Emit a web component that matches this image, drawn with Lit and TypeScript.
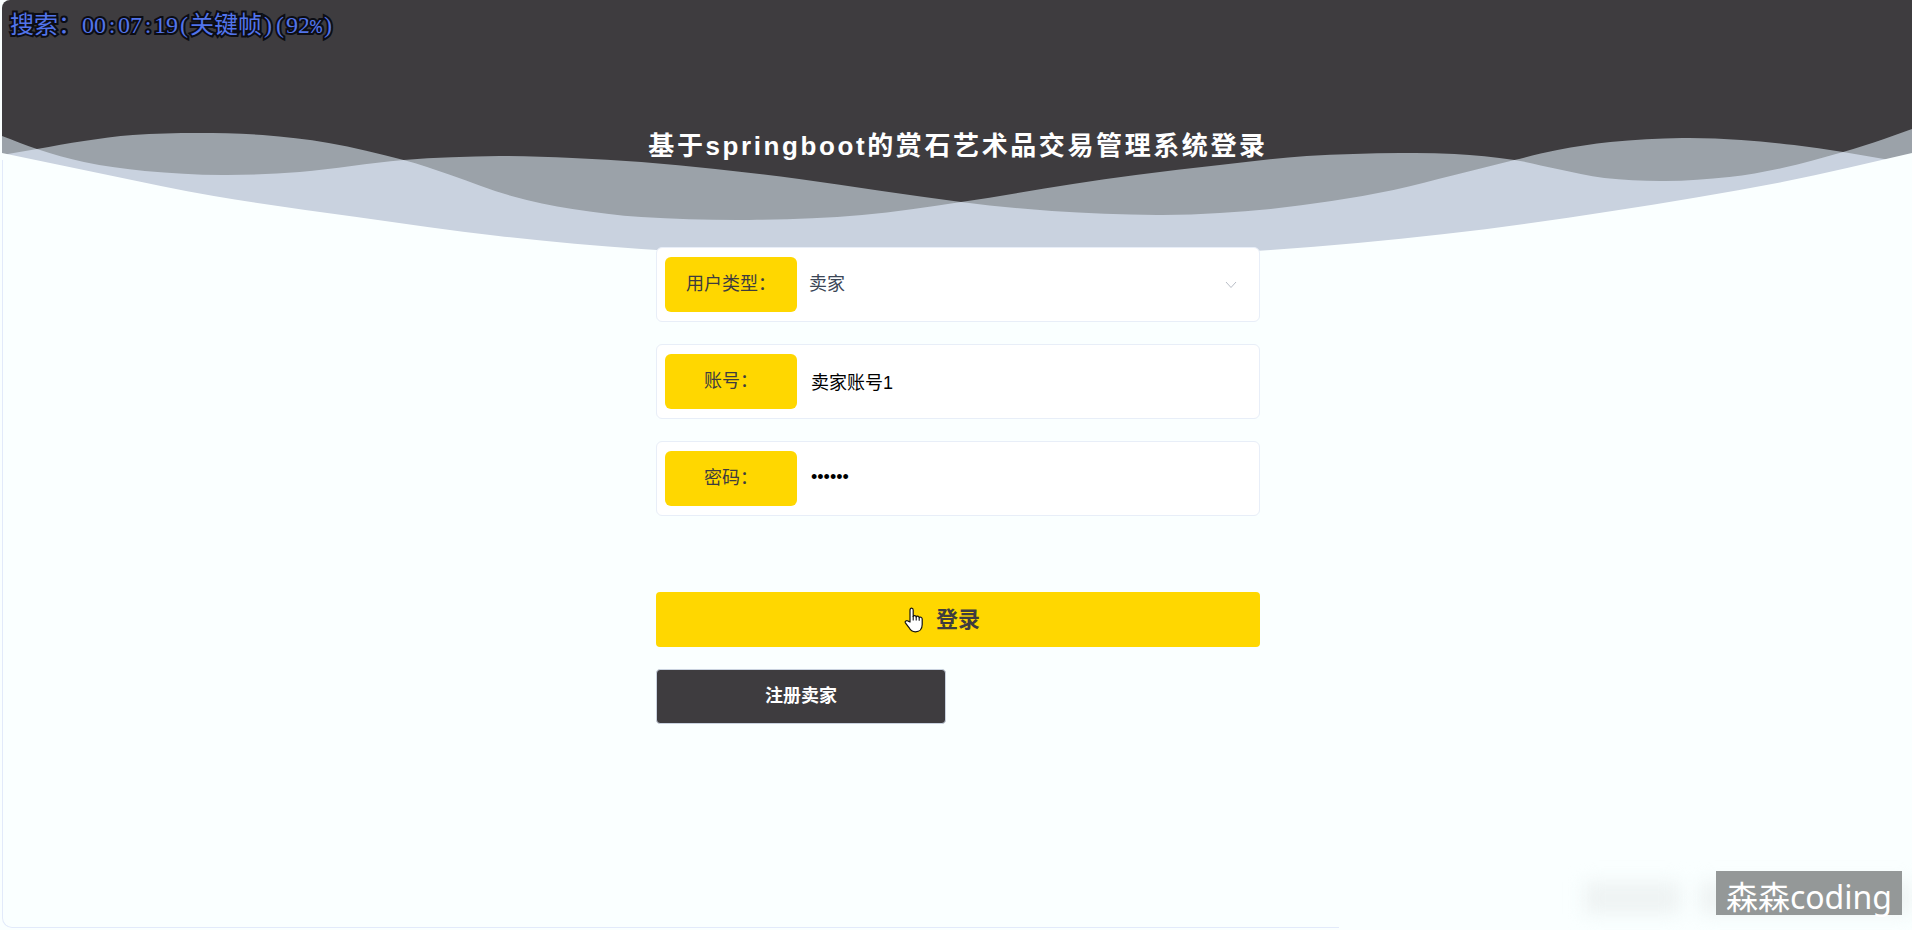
import { LitElement, html, svg, css } from "lit";
import { customElement, state } from "lit/decorators.js";

type Point = [number, number];

const ARC: Point[] = [
  [0, 153], [106, 175], [212, 196], [355, 217], [497, 236], [640, 249],
  [800, 257], [957, 260], [1114, 257], [1270, 250], [1444, 234],
  [1612, 211], [1782, 182], [1912, 153],
];

const WAVE_BACK: Point[] = [
  [0, 136], [35, 149], [82, 162], [143, 171], [220, 175], [298, 172],
  [402, 160], [498, 156], [571, 158], [640, 162], [714, 169], [798, 179],
  [960, 202], [1051, 211], [1156, 215], [1219, 213], [1270, 209],
  [1331, 201], [1393, 190], [1454, 175], [1514, 160], [1557, 150],
  [1610, 142], [1682, 138], [1741, 140], [1794, 145], [1843, 152],
  [1884, 159], [1912, 164],
];

const WAVE_FRONT: Point[] = [
  [0, 155], [35, 149], [82, 141], [131, 135], [196, 133], [261, 135],
  [327, 143], [402, 160], [449, 175], [510, 196], [571, 209], [640, 217],
  [748, 220], [861, 215], [960, 202], [1072, 184], [1135, 175],
  [1219, 165], [1306, 156], [1400, 153], [1454, 154], [1514, 160],
  [1557, 169], [1604, 178], [1665, 181], [1729, 177], [1782, 168],
  [1843, 152], [1884, 139], [1912, 129],
];

/** Smooth curve through the points, closed along the given horizontal edge. */
function wavePath(points: Point[], edge: number): string {
  let d = `M${points[0][0]} ${edge}L${points[0][0]} ${points[0][1]}`;
  for (let i = 0; i < points.length - 1; i++) {
    const p0 = points[Math.max(i - 1, 0)];
    const p1 = points[i];
    const p2 = points[i + 1];
    const p3 = points[Math.min(i + 2, points.length - 1)];
    const dx = (p2[0] - p1[0]) / 3;
    const s1 = (p2[1] - p0[1]) / (p2[0] - p0[0]);
    const s2 = (p3[1] - p1[1]) / (p3[0] - p1[0]);
    d += `C${p1[0] + dx} ${p1[1] + dx * s1} ${p2[0] - dx} ${p2[1] - dx * s2} ${p2[0]} ${p2[1]}`;
  }
  return `${d}V${edge}Z`;
}

@customElement("wave-banner")
class WaveBanner extends LitElement {
  static styles = css`
    :host { display: block; }
    .waves { display: block; width: 100%; height: 264px; }
    .base { fill: #3e3c3f; }
    .single { fill: #9ba2a9; }
    .double { fill: #c9d2df; }
    .ground { fill: #faffff; }
  `;

  render() {
    const back = wavePath(WAVE_BACK, 264);
    const front = wavePath(WAVE_FRONT, 264);
    return html`
      <svg class="waves" viewBox="0 0 1912 264" preserveAspectRatio="none" aria-hidden="true">
        ${svg`
          <defs>
            <clipPath id="overlap"><path d=${back} /></clipPath>
          </defs>
          <rect class="base" width="1912" height="230" />
          <path class="single" d=${back} />
          <path class="single" d=${front} />
          <g clip-path="url(#overlap)"><path class="double" d=${front} /></g>
          <path class="ground" d=${wavePath(ARC, 264)} />
        `}
      </svg>
    `;
  }
}

@customElement("app-root")
class AppRoot extends LitElement {
  static styles = css`
    :host {
      display: block;
      font-family: "Liberation Sans", "Noto Sans CJK SC", sans-serif;
      background: #faffff;
    }
    * { box-sizing: border-box; }
    .page {
      position: relative;
      display: grid;
      grid-template-columns: minmax(0, 1fr);
      grid-template-rows: 1fr;
      min-height: 100vh;
      padding: 0 0 2px 2px;
      overflow: hidden;
    }
    .page > .banner, .page > .content, .page > .edge { grid-area: 1 / 1; }
    .banner {
      align-self: start;
      border-top-left-radius: 8px;
      overflow: hidden;
    }
    .edge {
      width: 70%;
      border: solid #e2eafa;
      border-width: 0 0 1px 1px;
      border-radius: 0 0 0 10px;
      margin-top: 160px;
    }
    .content {
      position: relative;
      display: flex;
      flex-direction: column;
      align-items: center;
      padding: 126px 16px 32px 18px;
    }
    .title {
      margin: 0 0 81px;
      font-size: 26px;
      line-height: 40px;
      font-weight: 700;
      letter-spacing: 0.1em;
      color: #fff;
      text-align: center;
    }
    .form {
      display: flex;
      flex-direction: column;
      gap: 22px;
      width: 100%;
      max-width: 604px;
    }
    .row {
      display: flex;
      align-items: center;
      height: 75px;
      padding: 0 8px;
      background: #fff;
      border: 1px solid #e8eef8;
      border-radius: 6px;
    }
    .label {
      flex: none;
      width: 132px;
      line-height: 55px;
      border-radius: 6px;
      background: #ffd700;
      color: #3e3c3f;
      font-size: 18px;
      text-align: center;
    }
    .control {
      flex: 1;
      min-width: 0;
      height: 54px;
      border: 0;
      outline: 0;
      padding: 0 14px 2px;
      background: transparent;
      appearance: none;
      font-family: inherit;
      font-size: 18px;
      color: #000;
    }
    .choice { padding: 0 12px 2px; color: #3b4657; }
    .arrow {
      flex: none;
      width: 12px;
      margin-right: 14px;
      pointer-events: none;
    }
    .login, .register {
      font-family: inherit;
      font-weight: 700;
      border-radius: 4px;
      cursor: pointer;
    }
    .login {
      height: 55px;
      margin-top: 54px;
      border: 0;
      padding: 0 0 6px;
      background: #ffd700;
      color: #3e3c3f;
      font-size: 22px;
    }
    .register {
      align-self: flex-start;
      width: 290px;
      max-width: 100%;
      height: 55px;
      border: 1px solid #c9d2df;
      padding: 0 0 6px;
      background: #3e3c3f;
      color: #fff;
      font-size: 18px;
    }
    .osd {
      position: absolute;
      top: 9px;
      left: 10px;
      font-family: "Liberation Serif", "Noto Sans CJK SC", serif;
      font-size: 24px;
      line-height: 32px;
      white-space: nowrap;
      color: #5274ea;
      -webkit-text-stroke: 4px #0c0d14;
      paint-order: stroke fill;
    }
    .half { display: inline-block; width: 12px; text-align: center; }
    .percent { font-family: "Liberation Mono", monospace; font-size: 20px; }
    .pointer {
      position: absolute;
      top: 607px;
      left: calc(50% - 52px);
      width: 20px;
      height: 26px;
      pointer-events: none;
    }
    .smudge {
      position: absolute;
      right: 0;
      bottom: 16px;
      display: flex;
      gap: 20px;
      width: 328px;
      height: 32px;
      filter: blur(9px);
    }
    .smudge-short { width: 96px; background: #eef3f3; }
    .smudge-long { flex: 1; background: #eef3f3; }
    .watermark {
      position: absolute;
      right: 10px;
      bottom: 15px;
      height: 44px;
      padding: 0 10px;
      background: #949898;
      color: #fff;
      font-family: "Noto Sans", "Noto Sans CJK SC", sans-serif;
      font-size: 32px;
      line-height: 52px;
    }
  `;

  @state() private role = "卖家";

  render() {
    return html`
      <main class="page">
        <wave-banner class="banner"></wave-banner>
        <div class="edge"></div>
        <div class="content">
          <h1 class="title">基于springboot的赏石艺术品交易管理系统登录</h1>
          <form class="form" @submit=${(e: Event) => e.preventDefault()}>
            <div class="row">
              <label class="label" for="role">用户类型：</label>
              <select class="control choice" id="role" .value=${this.role}
                @change=${(e: Event) => (this.role = (e.target as HTMLSelectElement).value)}>
                <option>卖家</option>
              </select>
              <svg class="arrow" viewBox="0 0 12 8" aria-hidden="true">
                <path d="M1 1L6 6.5L11 1" fill="none" stroke="#b8bdc6" />
              </svg>
            </div>
            <div class="row">
              <label class="label" for="account">账号：</label>
              <input class="control" id="account" type="text" value="卖家账号1" />
            </div>
            <div class="row">
              <label class="label" for="password">密码：</label>
              <input class="control" id="password" type="password" value="123456" />
            </div>
            <button class="login" type="submit">登录</button>
            <button class="register" type="button">注册${this.role}</button>
          </form>
        </div>
        <div class="osd">搜索：00<span class="half">:</span>07<span class="half">:</span>19<span class="half">(</span>关键帧<span class="half">)</span><span class="half">(</span>92<span class="percent">%</span><span class="half">)</span></div>
        <svg class="pointer" viewBox="0 0 20 26" aria-hidden="true">
          <path d="M6 15V3.2C6 1.9 6.7 1.2 7.6 1.2S9.2 1.9 9.2 3.2V9.4C9.3 8.3 12 8.1 12.2 9.9C12.8 8.7 15 9 15.2 10.6C16 9.6 18.2 10.2 18.2 12V17.5C18.2 22 15.5 24.8 11.5 24.8C8 24.8 6.2 23 5 20.6L1.4 15.8C.6 14.5 2.5 12.7 4.2 14.1Z"
            fill="#fff" stroke="#111" stroke-width="1.2" stroke-linejoin="round" />
          <path d="M9.2 9V13.5M12.2 9.8V13.5M15.2 10.5V13.8" fill="none" stroke="#111" stroke-width="1.1" />
        </svg>
        <div class="smudge"><div class="smudge-short"></div><div class="smudge-long"></div></div>
        <div class="watermark">森森coding</div>
      </main>
    `;
  }
}
